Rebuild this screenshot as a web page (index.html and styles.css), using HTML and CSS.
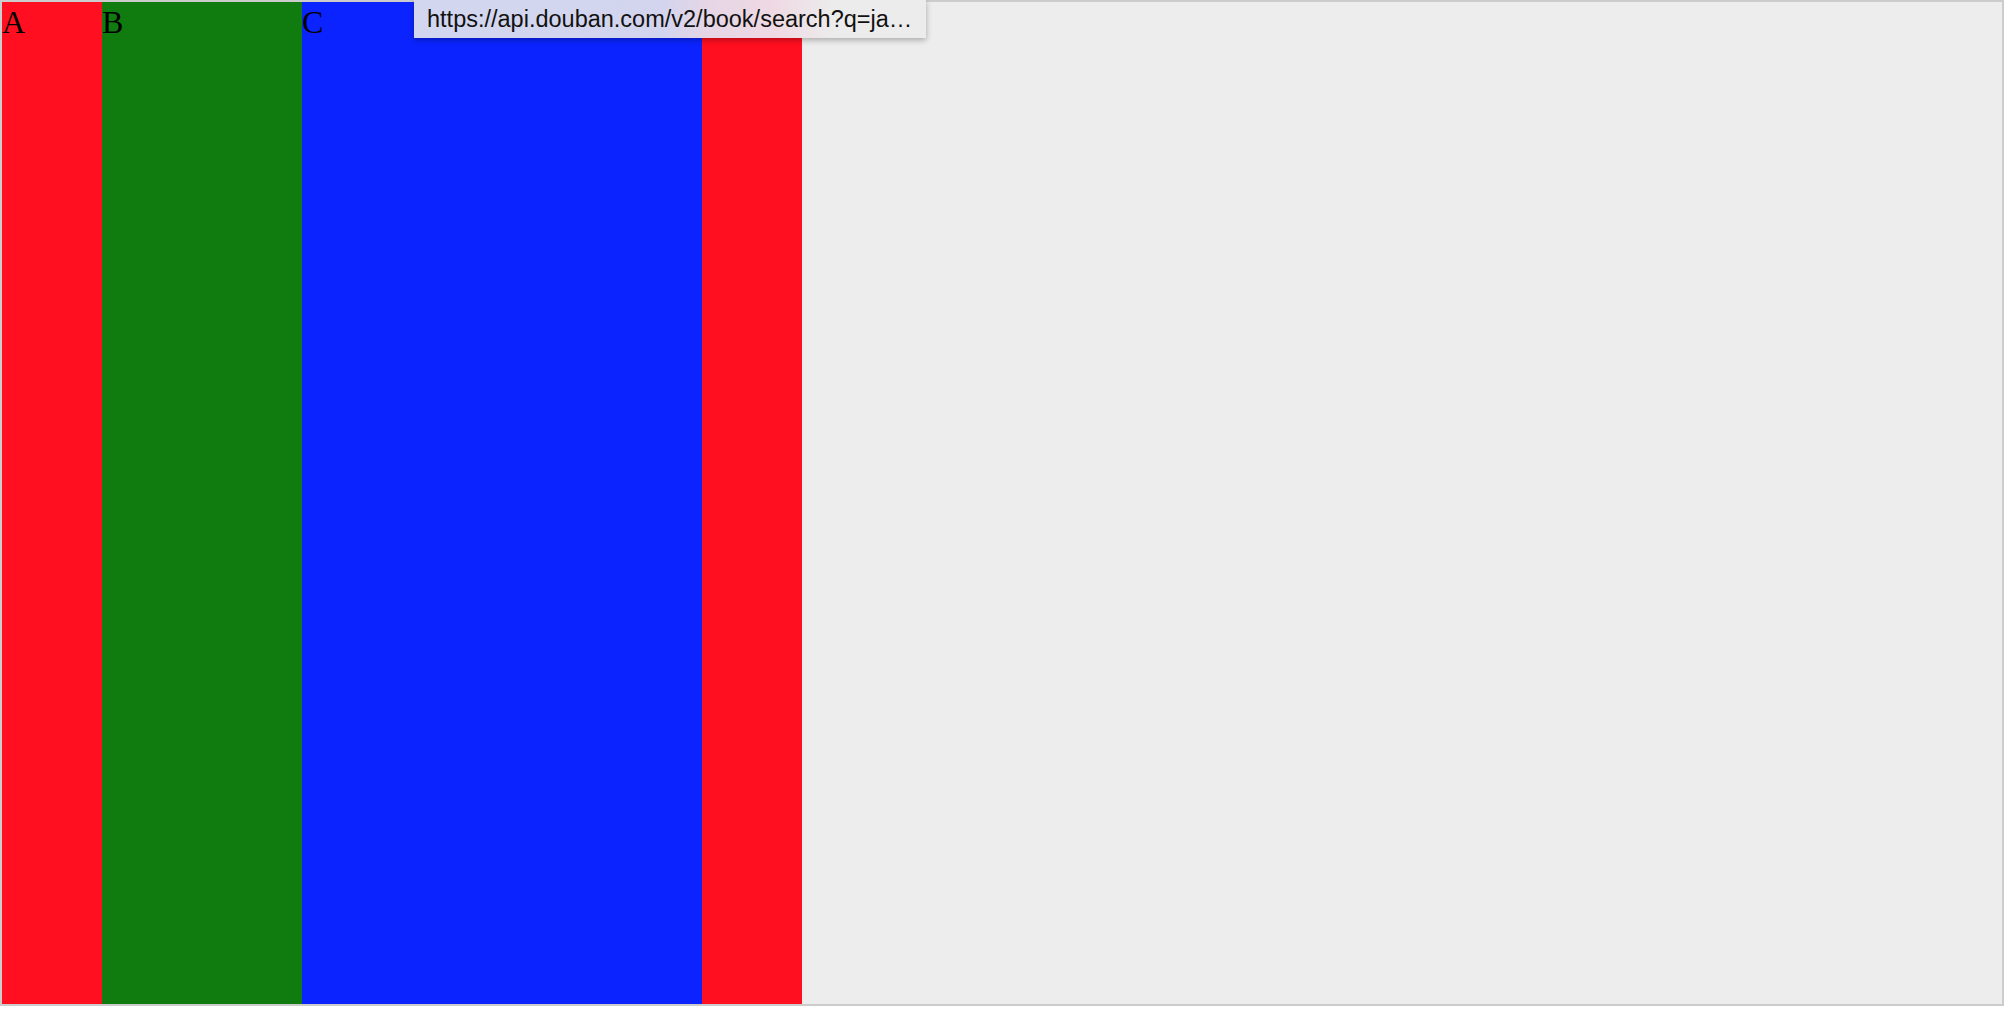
FILE: index.html
```html
<!DOCTYPE html>
<html>
<head>
<meta charset="utf-8">
<link rel="stylesheet" href="styles.css">
</head>
<body>
<div class="box">
  <div class="col col-a">A</div>
  <div class="col col-b">B</div>
  <div class="col col-c">C</div>
  <div class="col col-d"></div>
</div>
<div class="tooltip">https://api.douban.com/v2/book/search?q=ja…</div>
</body>
</html>
```
FILE: styles.css
```css
html, body {
  margin: 0;
  padding: 0;
  background: #ffffff;
}
.box {
  width: 2000px;
  height: 1002px;
  border: 2px solid #cccccc;
  background: #ededed;
  display: flex;
}
.col {
  height: 100%;
  font-family: "Liberation Serif", "Times New Roman", serif;
  font-size: 32px;
  line-height: 40px;
  color: #000;
}
.col-a { width: 100px; background: #ff0f1f; }
.col-b { width: 200px; background: #107c10; }
.col-c { width: 400px; background: #0b24ff; }
.col-d { width: 100px; background: #ff0f1f; }
.tooltip {
  position: absolute;
  top: 0;
  left: 414px;
  width: 512px;
  height: 38px;
  box-sizing: border-box;
  padding-left: 13px;
  font-family: "Liberation Sans", Arial, sans-serif;
  font-size: 23.5px;
  line-height: 38px;
  color: #111;
  white-space: nowrap;
  overflow: hidden;
  background: linear-gradient(to right, #d2d6ef 0px, #d3d5ee 250px, #e6d6e6 295px, #efd9e3 360px, #ececec 420px, #ececec 512px);
  box-shadow: 0 2px 6px rgba(0, 0, 0, 0.3);
}
```
